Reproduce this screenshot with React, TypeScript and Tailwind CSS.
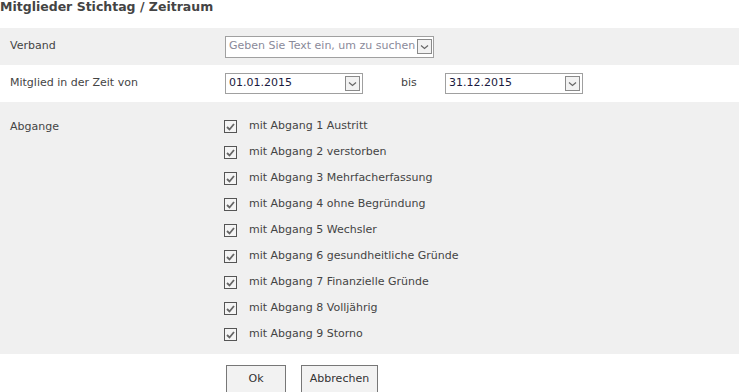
import { useState } from "react"

const abgaenge = [
    "mit Abgang 1 Austritt",
    "mit Abgang 2 verstorben",
    "mit Abgang 3 Mehrfacherfassung",
    "mit Abgang 4 ohne Begründung",
    "mit Abgang 5 Wechsler",
    "mit Abgang 6 gesundheitliche Gründe",
    "mit Abgang 7 Finanzielle Gründe",
    "mit Abgang 8 Volljährig",
    "mit Abgang 9 Storno",
]

const Chevron = () => <svg width="9" height="6" viewBox="0 0 9 6">
    <path d="M1 1.5 L4.5 4.5 L8 1.5" fill="none" stroke="#666" strokeWidth="1.2" />
</svg>

const DropButton = () => <span className="flex items-center justify-center w-[15px] h-[15px] border border-[#8a8a8a] bg-[#f2f2f2]">
    <Chevron />
</span>

const DateField = ({ value }: { value: string }) => <div className="flex items-center justify-between w-[138px] h-[21px] border border-[#a0a0a0] bg-white pl-[3px] pr-[2px]">
    <span className="text-[#1a1a40]">{value}</span>
    <DropButton />
</div>

const Check = ({ checked, onClick }: { checked: boolean, onClick: () => void }) => <button onClick={onClick} className="flex items-center justify-center w-[13px] h-[13px] border border-[#555] bg-[#f4f4f4]">
    {checked && <svg width="9" height="8" viewBox="0 0 9 8">
        <path d="M1 4 L3.5 6.5 L8 1" fill="none" stroke="#666" strokeWidth="1.8" />
    </svg>}
</button>

export default function App() {
    const [checked, setChecked] = useState(abgaenge.map(() => true))

    return <div className="w-[739px] h-[392px] overflow-hidden bg-white text-[11px] text-[#444]" style={{ fontFamily: '"DejaVu Sans", Verdana, sans-serif' }}>
        <div className="h-[28px] font-bold text-[12.5px] text-[#444] leading-[14px]">Mitglieder Stichtag / Zeitraum</div>
        <div className="flex items-center h-[37px] bg-[#f0f0f0]">
            <div className="w-[225px] pl-[10px]">Verband</div>
            <div className="flex items-center justify-between w-[209px] h-[22px] border border-[#a0a0a0] bg-white pl-[3px] pr-[1px]">
                <span className="text-[#8a8a9a]">Geben Sie Text ein, um zu suchen</span>
                <DropButton />
            </div>
        </div>
        <div className="flex items-center h-[37px]">
            <div className="w-[225px] pl-[10px]">Mitglied in der Zeit von</div>
            <DateField value="01.01.2015" />
            <div className="w-[82px] pl-[38px]">bis</div>
            <DateField value="31.12.2015" />
        </div>
        <div className="flex h-[252px] bg-[#f0f0f0] pt-[18px]">
            <div className="w-[224px] pl-[10px] leading-[13px]">Abgange</div>
            <div className="flex flex-col gap-[13px]">
                {abgaenge.map((label, i) => <div key={label} className="flex items-center gap-[12px] h-[13px]">
                    <Check checked={checked[i]} onClick={() => setChecked(checked.map((c, j) => j === i ? !c : c))} />
                    <span>{label}</span>
                </div>)}
            </div>
        </div>
        <div className="flex gap-[15px] pl-[226px] pt-[11px]">
            <button className="w-[60px] h-[28px] border border-[#777] bg-[#f2f2f2] text-[#333]">Ok</button>
            <button className="w-[77px] h-[28px] border border-[#777] bg-[#f2f2f2] text-[#333]">Abbrechen</button>
        </div>
    </div>
}
